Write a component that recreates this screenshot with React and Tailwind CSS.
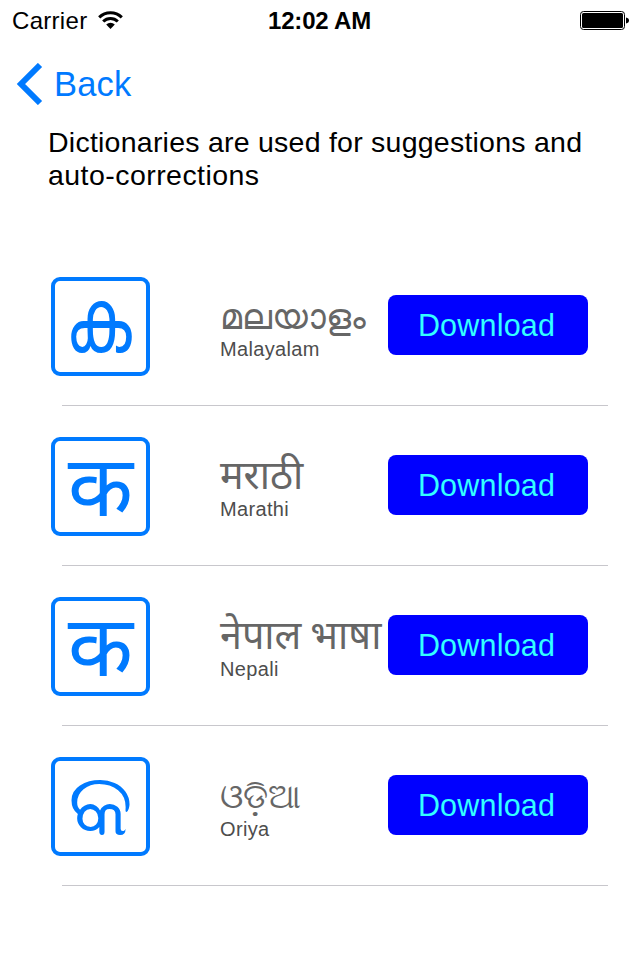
const languages = [
  {
    name: 'Malayalam',
    native: 'മലയാളം',
    glyph: 'ക',
    nativeClass: 'text-[35px] pt-px',
    glyphClass: 'text-[70px] scale-y-[1.3] -mt-3 -ml-1',
  },
  {
    name: 'Marathi',
    native: 'मराठी',
    glyph: 'क',
    nativeClass: 'text-[39.5px] -mt-px mb-px',
    glyphClass: 'text-[85px]',
  },
  {
    name: 'Nepali',
    native: 'नेपाल भाषा',
    glyph: 'क',
    nativeClass: 'text-[39.5px] -mt-px mb-px [word-spacing:-2px]',
    glyphClass: 'text-[85px]',
  },
  {
    name: 'Oriya',
    native: 'ଓଡ଼ିଆ',
    glyph: 'କ',
    nativeClass: 'text-[33.5px] pt-px',
    glyphClass: 'text-[88px] -mt-1',
  },
]

function StatusBar() {
  return (
    <div className="grid h-10 grid-cols-3 items-center pl-3 pr-[11px] text-black">
      <div className="flex items-center gap-[11px]">
        <span className="pt-0.5 text-[24px] leading-none tracking-[0.3px]">Carrier</span>
        <svg width="25" height="18" viewBox="0 0 25 18" fill="none" stroke="black" strokeWidth="3">
          <path d="M1.200 6.400a16 16 0 0 1 22.600 0" />
          <path d="M5.200 10.500a10.300 10.300 0 0 1 14.600 0" />
          <path d="M12.500 18l-4.300-4.400a6.200 6.200 0 0 1 8.600 0z" fill="black" stroke="none" />
        </svg>
      </div>
      <span className="pr-0.5 pt-0.5 text-center text-[24px] font-bold leading-none tracking-[-0.2px]">12:02 AM</span>
      <svg className="justify-self-end" width="49" height="19" viewBox="0 0 49 19">
        <rect x="0.5" y="0.5" width="44" height="18" rx="3" fill="none" stroke="black" />
        <rect x="2" y="2" width="41" height="15" rx="1.5" />
        <path d="M46 6.500c4 0.500 4 5.500 0 6z" />
      </svg>
    </div>
  )
}

function LanguageRow({ language }) {
  return (
    <li>
      <div className="flex h-[158px] items-center pl-[51px]">
        <div className="mt-[3px] flex size-[99px] shrink-0 items-center justify-center rounded-[9px] border-4 border-[#007aff] text-[#007aff]">
          <span className={`leading-none ${language.glyphClass}`}>{language.glyph}</span>
        </div>
        <div className="ml-[70px] w-[167px] shrink-0 whitespace-nowrap pt-1.5">
          <p className={`h-[42px] leading-[42px] text-[#666] ${language.nativeClass}`}>{language.native}</p>
          <p className="text-[20px] leading-6 tracking-[0.35px] text-[#4d4d4d]">{language.name}</p>
        </div>
        <button className="ml-px h-[60px] w-[200px] rounded-lg bg-[#0000ff] pr-[3px] pt-0.5 text-[30.5px] tracking-[0.2px] text-[#33ffff]">
          Download
        </button>
      </div>
      <div className="ml-[62px] mr-8 mt-px h-px bg-[#c8c7cc]" />
    </li>
  )
}

export default function App() {
  return (
    <main className="h-[960px] w-[640px] overflow-hidden bg-white font-['Liberation_Sans','Noto_Sans',sans-serif]">
      <StatusBar />
      <header className="flex h-[86px] items-center pl-4 pt-0.5 text-[#007aff]">
        <svg width="27" height="42" viewBox="0 0 27 42" fill="none" stroke="currentColor" strokeWidth="6">
          <path d="M24 2L5 21l19 19" />
        </svg>
        <span className="ml-[11px] pt-px text-[34.5px] leading-none tracking-[0.2px]">Back</span>
      </header>
      <p className="pl-12 text-[28.5px] leading-[33px] tracking-[0.24px] text-black">
        Dictionaries are used for suggestions and
        <br />
        <span className="tracking-[0.45px]">auto-corrections</span>
      </p>
      <ul className="mt-[54px]">
        {languages.map((language) => (
          <LanguageRow key={language.name} language={language} />
        ))}
      </ul>
    </main>
  )
}
